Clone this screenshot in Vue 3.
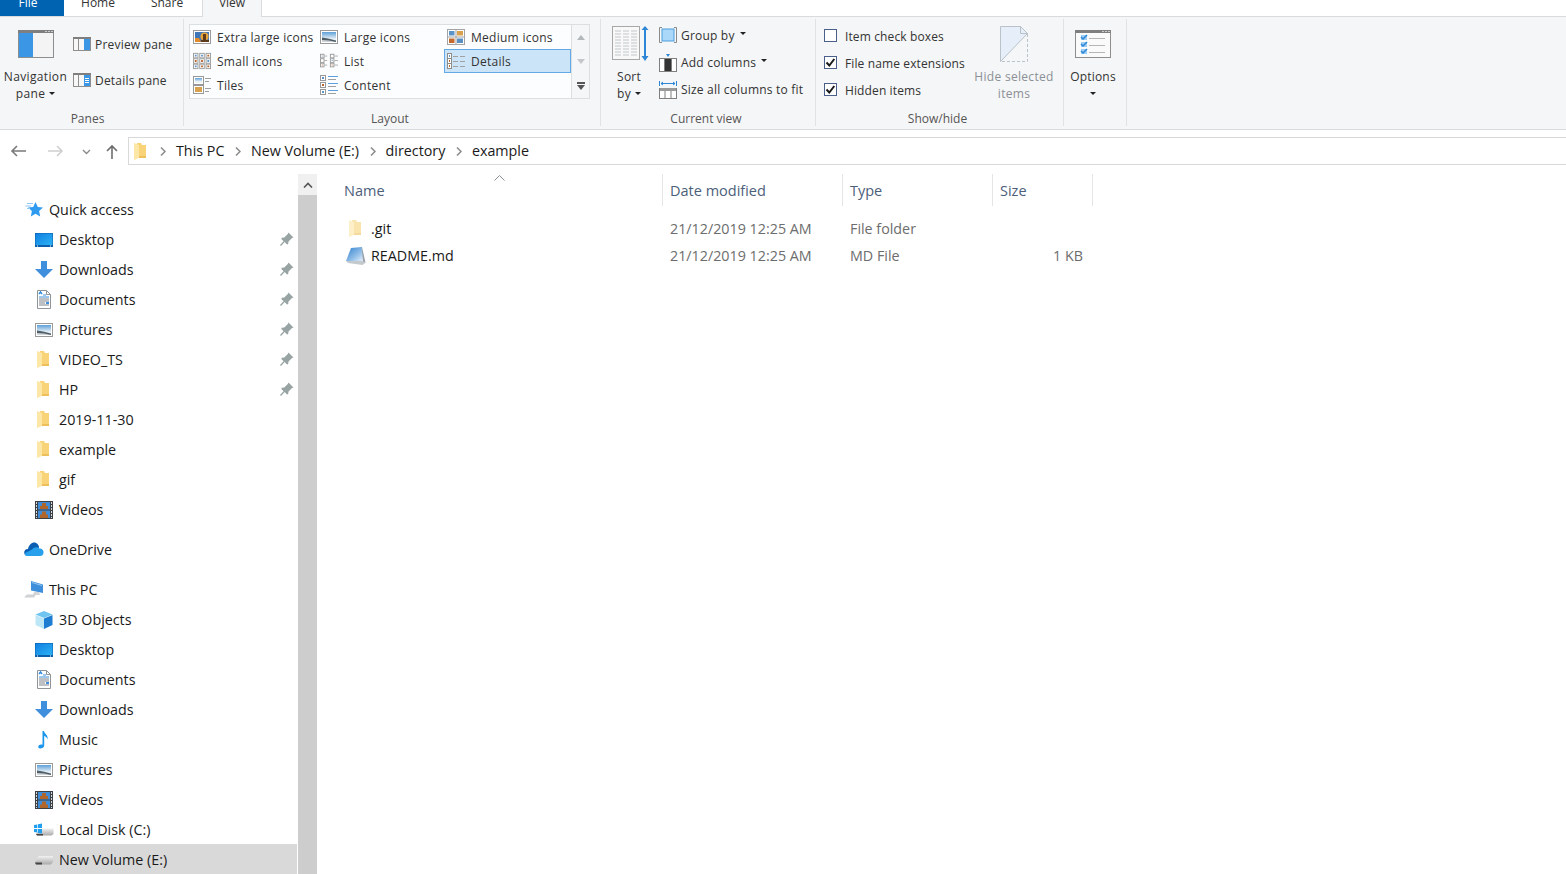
<script setup>
const quick = [
  ['desktop', 'Desktop'], ['downloads', 'Downloads'], ['documents', 'Documents'],
  ['pictures', 'Pictures'], ['folder', 'VIDEO_TS'], ['folder', 'HP'],
]
const quick2 = [['folder', '2019-11-30'], ['folder', 'example'], ['folder', 'gif'], ['videos', 'Videos']]
const pc = [
  ['cube', '3D Objects'], ['desktop', 'Desktop'], ['documents', 'Documents'], ['downloads', 'Downloads'],
  ['music', 'Music'], ['pictures', 'Pictures'], ['videos', 'Videos'], ['localdisk', 'Local Disk (C:)'],
]
const gallery = [
  ['g-xl', 'Extra large icons'], ['pictures-g', 'Large icons'], ['g-med', 'Medium icons'],
  ['g-small', 'Small icons'], ['g-list', 'List'], ['g-details', 'Details'],
  ['g-tiles', 'Tiles'], ['g-content', 'Content'],
]
const crumbs = ['This PC', 'New Volume (E:)', 'directory', 'example']
const checks = [['Item check boxes', false], ['File name extensions', true], ['Hidden items', true]]
const files = [
  { icon: 'folder', cls: 'ghost', name: '.git', date: '21/12/2019 12:25 AM', type: 'File folder', size: '' },
  { icon: 'mdfile', cls: '', name: 'README.md', date: '21/12/2019 12:25 AM', type: 'MD File', size: '1 KB' },
]
</script>

<template>
  <div class="win">
    <svg class="defs" aria-hidden="true">
      <defs>
        <linearGradient id="gDesk" x1="0" y1="0" x2="1" y2="1"><stop offset="0" stop-color="#0f7fe0"/><stop offset="1" stop-color="#2db2f5"/></linearGradient>
        <linearGradient id="gSky" x1="0" y1="0" x2="0" y2="1"><stop offset="0" stop-color="#5d9fd8"/><stop offset=".7" stop-color="#e8f1f7"/><stop offset="1" stop-color="#f2f4f5"/></linearGradient>
        <linearGradient id="gMd" x1="0" y1="0" x2="1" y2="1"><stop offset="0" stop-color="#2f7fcb"/><stop offset=".6" stop-color="#8fbde8"/><stop offset="1" stop-color="#e6f0fa"/></linearGradient>
        <linearGradient id="gDrive" x1="0" y1="0" x2="0" y2="1"><stop offset="0" stop-color="#f2f2f2"/><stop offset="1" stop-color="#a9a9a9"/></linearGradient>
        <symbol id="folder" viewBox="0 0 20 20">
          <path fill="#f8d377" d="M6 1h4l1 2h4v13H6z"/>
          <path fill="#fde7a6" d="M3 1l5 2v13l-5 2z"/>
          <path fill="#edc05c" d="M8 14h7v2H8z"/>
        </symbol>
        <symbol id="mdfile" viewBox="0 0 20 20">
          <path fill="#9aa3ab" d="M15 1l1 0 3.500 15.500-3 2z"/>
          <path fill="url(#gMd)" d="M5 2l10.500-1L17 15 0 15z"/>
          <path fill="#c4c9cd" d="M0 15l17 0 2.500 1.500-3 2.500L2 17z"/>
        </symbol>
        <symbol id="desktop" viewBox="0 0 20 20">
          <rect x="1" y="3" width="18" height="14" fill="#0c5fa8"/>
          <rect x="1.500" y="3.500" width="17" height="11.500" fill="url(#gDesk)"/>
          <path fill="#fff" d="M3 15.600h1v1H3zm13 0h1v1h-1z"/>
        </symbol>
        <symbol id="downloads" viewBox="0 0 20 20">
          <path fill="#3f8fdc" d="M7 1h6v8h6l-9 9-9-9h6z"/>
        </symbol>
        <symbol id="documents" viewBox="0 0 20 20">
          <path fill="#fff" stroke="#8f9499" d="M3.500.5h9l4 4v14h-13z"/>
          <path fill="none" stroke="#8f9499" d="M12.500.5v4h4"/>
          <path stroke="#2f8ce0" stroke-width="1.500" fill="none" d="M5 4l1.500-2 1.500 2"/>
          <path stroke="#3c8fdc" d="M9 5h3M5 7h10"/>
          <path stroke="#7b8188" d="M5 9h10M5 11h10M5 13h6M5 15h10"/>
          <path fill="#3f8fdc" d="M12 12h3v2h-3z"/>
        </symbol>
        <symbol id="pictures" viewBox="0 0 20 20">
          <rect x="1.500" y="3.500" width="17" height="13" fill="#fff" stroke="#9a9a9a"/>
          <rect x="3" y="5" width="14" height="10" fill="url(#gSky)"/>
          <path fill="#4f5d67" d="M3 10.500l6 1 8 2V15H3z"/>
          <path fill="#cfd5d9" d="M3 13l7 .5 7 1.500H3z"/>
        </symbol>
        <symbol id="pictures-g" viewBox="1 3 18 14">
          <rect x="1.500" y="3.500" width="17" height="13" fill="#fff" stroke="#9a9a9a"/>
          <rect x="3" y="5" width="14" height="10" fill="url(#gSky)"/>
          <path fill="#4f5d67" d="M3 10.500l6 1 8 2V15H3z"/>
          <path fill="#cfd5d9" d="M3 13l7 .5 7 1.500H3z"/>
        </symbol>
        <symbol id="videos" viewBox="0 0 20 20">
          <rect x="1" y="1" width="18" height="18" fill="#3b4046"/>
          <path fill="#d8d8d8" d="M2 2h1v2H2zm0 3h1v2H2zm0 3h1v2H2zm0 3h1v2H2zm0 3h1v2H2zm0 3h1v1H2zm15-15h1v2h-1zm0 3h1v2h-1zm0 3h1v2h-1zm0 3h1v2h-1zm0 3h1v2h-1zm0 3h1v1h-1z"/>
          <rect x="4" y="2" width="12" height="7.500" fill="#3f8cd8"/>
          <rect x="4" y="10.500" width="12" height="7.500" fill="#3f8cd8"/>
          <path fill="#b0662a" d="M8 3h4v3h2v3H6V6h2zm0 8.500h4v3h2V18H6v-3.500h2z"/>
        </symbol>
        <symbol id="star" viewBox="0 0 20 20">
          <path fill="#2f9bf0" d="M11.500 2l2.300 5 5.200.6-3.900 3.500 1.100 5.400-4.700-2.800-4.700 2.800 1.100-5.400L4 7.600l5.200-.6z"/>
          <path stroke="#8ec8f4" d="M3 3.500h6M1.500 6H7M3 8.500h3" fill="none"/>
        </symbol>
        <symbol id="onedrive" viewBox="0 0 20 20">
          <path fill="#0a5fb2" d="M1 15C-.5 13 0 9 4 9 5 4 9 1.500 12 3c2 1 3 2.500 3 4.500L9 14z"/>
          <path fill="#28a0ec" d="M3 16c-2 0-3-2-1-3.500l6-3c2-2.500 5-3 7.500-1 2.500 0 4.500 2 4 4.500-.2 2-1.500 3-3.500 3z"/>
        </symbol>
        <symbol id="pc" viewBox="0 0 20 20">
          <path fill="#3d8fdc" d="M7 1l12 3.500V13L7 10.500z"/>
          <path fill="#9ac9ef" d="M8 2l10 3v1L8 3z"/>
          <path fill="#d5d5d5" d="M10 12h5l1 3H9z"/>
          <path fill="#cfd2d4" d="M3 14.500h9l-2 3H0z"/>
        </symbol>
        <symbol id="cube" viewBox="0 0 20 20">
          <path fill="#6fc5ef" d="M10 1l8.500 3.500L10 8 1.500 4.500z"/>
          <path fill="#bde7f7" d="M1.500 5L10 8.500V19l-8.500-4z"/>
          <path fill="#1d7dd0" d="M18.500 5L10 8.500V19l8.500-4z"/>
        </symbol>
        <symbol id="music" viewBox="0 0 20 20">
          <path fill="#1b96ec" d="M8.500 1h1.500c.4 3 4.500 4 3.500 8.500-.3-2-1.800-3-3.300-3.600V15.500c0 2-2.200 3-4 3s-2.500-1.800-1.500-3c1-1 2.600-1.300 3.800-.8z"/>
        </symbol>
        <symbol id="drive" viewBox="0 0 20 20">
          <path fill="url(#gDrive)" d="M4.500 6h14.500v6l-2 2.500H2l-1-2z"/>
          <path fill="#444" d="M1 12.500h7v2H2z"/>
        </symbol>
        <symbol id="localdisk" viewBox="0 0 20 20">
          <path fill="url(#gDrive)" d="M6 8.500h13.500v5.500l-2 1.500H3l-1-1.500z"/>
          <path fill="#444" d="M2 14h7v1.500H3z"/>
          <path fill="#20a0ee" d="M0 5l3.300-.5V8H0zm4-.7L8 3.500V8H4zM0 9h3.300v3.500L0 12zm4 0h4v4.500l-4-.6z"/>
        </symbol>
        <symbol id="pin" viewBox="0 0 14 14">
          <path fill="#98a3a3" d="M8.500.5l5 5-1.500.5-3.500 3.500-.3 2.500-1.200.5-2.300-2.400L1 14l-1-1 3.600-3.800L1.300 7l.5-1.200 2.500-.3L7.800 2z"/>
        </symbol>
        <symbol id="g-xl" viewBox="0 0 18 16">
          <rect x=".5" y="1.500" width="17" height="13" fill="#fff" stroke="#9a9a9a"/>
          <rect x="2" y="3" width="14" height="10" fill="#3f76b9"/>
          <path fill="#e08b2b" d="M2 9h4l2 4H2z"/>
          <circle cx="11.500" cy="7.500" r="4" fill="#e8a33b"/>
          <path fill="#5c3a1c" d="M10 5h3v6h3v2H8v-2h2z"/>
        </symbol>
        <symbol id="g-med" viewBox="0 0 18 16">
          <rect x=".5" y=".5" width="17" height="15" fill="#fff" stroke="#a3a3a3"/>
          <path fill="#a3a3a3" d="M8.500 0h1v16h-1zM0 7.500h18v1H0z"/>
          <rect x="2" y="2" width="5.500" height="4.500" fill="#5b93c9"/><rect x="10" y="2" width="6" height="4.500" fill="#d9a14e"/>
          <rect x="2" y="9.500" width="5.500" height="4.500" fill="#c46a2c"/><rect x="10" y="9.500" width="6" height="4.500" fill="#5a8fc4"/>
        </symbol>
        <symbol id="g-small" viewBox="0 0 20 18">
          <g fill="#fff" stroke="#989898"><rect x=".5" y=".5" width="5" height="5"/><rect x="7.500" y=".5" width="5" height="5"/><rect x="14.500" y=".5" width="5" height="5"/><rect x=".5" y="6.500" width="5" height="5"/><rect x="7.500" y="6.500" width="5" height="5"/><rect x="14.500" y="6.500" width="5" height="5"/><rect x=".5" y="12.500" width="5" height="5"/><rect x="7.500" y="12.500" width="5" height="5"/><rect x="14.500" y="12.500" width="5" height="5"/></g>
          <path fill="#5b93c9" d="M2 2h2v2H2zm7 0h2v2H9zm7 6h2v2h-2zM2 14h2v2H2z"/>
          <path fill="#b8642a" d="M16 2h2v2h-2zM2 8h2v2H2zm7 0h2v2H9zm0 6h2v2H9zm7 0h2v2h-2z"/>
        </symbol>
        <symbol id="g-list" viewBox="0 0 20 16">
          <g fill="#fff" stroke="#989898"><rect x=".5" y=".5" width="4" height="4"/><rect x=".5" y="5.500" width="4" height="4"/><rect x=".5" y="10.500" width="4" height="4"/><rect x="11.500" y=".5" width="4" height="4"/><rect x="11.500" y="5.500" width="4" height="4"/><rect x="11.500" y="10.500" width="4" height="4"/></g>
          <path stroke="#a8a8a8" d="M5 2.500h3M5 7.500h3M5 12.500h3M16 2.500h4M16 7.500h4M16 12.500h4"/>
          <path fill="#b8642a" d="M2 12h1v1H2zm11 0h1v1h-1z"/><path fill="#5b93c9" d="M2 2h1v1H2zm11 5h1v1h-1z"/>
        </symbol>
        <symbol id="g-details" viewBox="0 0 18 16">
          <rect x=".5" y=".5" width="4" height="15" fill="#fff" stroke="#8c8c8c"/>
          <path stroke="#8c8c8c" d="M1 5.500h3M1 10.500h3"/>
          <path fill="#5b93c9" d="M2 2h1v2H2z"/><path fill="#b8642a" d="M2 7h1v2H2zm0 5h1v2H2z"/>
          <path stroke="#a1a1a1" d="M6 3.500h5M13 3.500h5M6 8.500h5M13 8.500h5M6 13.500h5M13 13.500h5"/>
        </symbol>
        <symbol id="g-tiles" viewBox="0 0 18 18">
          <rect x=".5" y=".5" width="10" height="8" fill="#fff" stroke="#989898"/>
          <rect x="2" y="2" width="7" height="5" fill="url(#gSky)"/>
          <rect x=".5" y="9.500" width="10" height="8" fill="#fff" stroke="#989898"/>
          <rect x="2" y="11" width="7" height="5" fill="#d9a14e"/>
          <path stroke="#a0a0a0" d="M12 2.500h6M12 5.500h4M12 12.500h6M12 15.500h4"/>
        </symbol>
        <symbol id="g-content" viewBox="0 0 18 20">
          <g fill="#fff" stroke="#989898"><rect x=".5" y=".5" width="5" height="5"/><rect x=".5" y="7.500" width="5" height="5"/><rect x=".5" y="14.500" width="5" height="5"/></g>
          <path fill="#5b93c9" d="M2 2h2v2H2zm0 14h2v2H2z"/><path fill="#b8642a" d="M2 9h2v2H2z"/>
          <path stroke="#5f9fdb" d="M8 1.500h10M8 8.500h10M8 15.500h10"/>
          <path stroke="#a0a0a0" d="M8 4.500h8M8 11.500h8M8 18.500h8"/>
        </symbol>
      </defs>
    </svg>

    <header class="tabs">
      <div class="tab file">File</div>
      <div class="tab home">Home</div>
      <div class="tab share">Share</div>
      <div class="tab view">View</div>
    </header>

    <section class="ribbon">
      <div class="group panes">
        <div class="gbody">
          <div class="big navp">
            <svg class="bigicon" width="36" height="28" viewBox="0 0 36 28">
              <rect x=".5" y=".5" width="35" height="27" fill="#f4f4f4" stroke="#8e8e8e"/>
              <rect x="0" y="0" width="36" height="3" fill="#7f7f7f"/>
              <path fill="#ccc" d="M27 1h2v1h-2zm3 0h2v1h-2zm3 0h2v1h-2z"/>
              <rect x="1" y="3" width="14" height="24" fill="#3b97e6"/>
            </svg>
            <div class="bigtext">Navigation<br>pane<i class="caret"></i></div>
          </div>
          <div class="paneopts">
            <div class="paneopt">
              <svg width="18" height="14" viewBox="0 0 18 14"><rect x=".5" y=".5" width="17" height="13" fill="#f7f7f7" stroke="#8e8e8e"/><rect width="18" height="2" fill="#7f7f7f"/><path stroke="#8e8e8e" d="M5.500 2v12"/><rect x="11" y="2" width="6" height="11" fill="#3b97e6"/></svg>
              <span>Preview pane</span>
            </div>
            <div class="paneopt">
              <svg width="18" height="14" viewBox="0 0 18 14"><rect x=".5" y=".5" width="17" height="13" fill="#f7f7f7" stroke="#8e8e8e"/><rect width="18" height="2" fill="#7f7f7f"/><path stroke="#8e8e8e" d="M5.500 2v12"/><rect x="11" y="2" width="6" height="11" fill="#3b97e6"/><path stroke="#fff" d="M12 5.500h4M12 7.500h4M12 9.500h4"/></svg>
              <span>Details pane</span>
            </div>
          </div>
        </div>
        <div class="glabel lb8">Panes</div>
      </div>

      <div class="group layout">
        <div class="gbody">
          <div class="gallery">
            <div v-for="g in gallery" :key="g[1]" class="gitem" :class="{ sel: g[1] === 'Details' }">
              <svg class="gico"><use :href="'#' + g[0]"/></svg>
              <span>{{ g[1] }}</span>
            </div>
          </div>
          <div class="scroller">
            <div class="scell"><i class="tri t-up"></i></div>
            <div class="scell"><i class="tri t-down"></i></div>
            <div class="scell"><i class="more"></i><i class="tri t-dark"></i></div>
          </div>
        </div>
        <div class="glabel lb4">Layout</div>
      </div>

      <div class="group current">
        <div class="gbody">
          <div class="big sortb">
            <svg class="sorticon" width="37" height="35" viewBox="0 0 37 35">
              <rect x=".5" y=".5" width="27" height="33" fill="#f8f8f8" stroke="#a8a8a8"/>
              <path stroke="#c2c7ca" d="M3 5h6M11 5h6M19 5h6M3 8h6M11 8h6M19 8h6M3 11h6M11 11h6M19 11h6M3 14h6M11 14h6M19 14h6M3 17h6M11 17h6M19 17h6M3 20h6M11 20h6M19 20h6M3 23h6M11 23h6M19 23h6M3 26h6M11 26h6M19 26h6M3 29h6M11 29h6M19 29h6"/>
              <path fill="#2d86d6" d="M33 0l3.500 4H34v26h2.500L33 35l-3.500-5H32V4h-2.500z"/>
            </svg>
            <div class="bigtext">Sort<br>by<i class="caret"></i></div>
          </div>
          <div class="viewopts">
            <div class="viewopt">
              <svg width="18" height="17" viewBox="0 0 18 17"><path fill="none" stroke="#8a8a8a" d="M3 .5H.5v15H3M15 .5h2.500v15H15"/><rect x="3" y="2" width="12" height="12" fill="#a9d8f8" stroke="#4d9ddd"/></svg>
              <span>Group by</span><i class="caret"></i>
            </div>
            <div class="viewopt">
              <svg width="18" height="18" viewBox="0 0 18 18"><rect x=".5" y="4.500" width="17" height="13" fill="#fff" stroke="#7f7f7f"/><path stroke="#7f7f7f" d="M5.500 4v14M12.500 4v14"/><rect x="6" y="5" width="6" height="12" fill="#333"/><path fill="#2d86d6" d="M7 0h4L9 3z"/></svg>
              <span>Add columns</span><i class="caret"></i>
            </div>
            <div class="viewopt">
              <svg width="18" height="18" viewBox="0 0 18 18"><rect x=".5" y="7.500" width="17" height="10" fill="#fff" stroke="#7f7f7f"/><path fill="#9a9a9a" d="M1 7h16v3H1z"/><path stroke="#7f7f7f" d="M6 10v8M12 10v8"/><path stroke="#2d86d6" fill="none" d="M.5 0v5M17.500 0v5M2 2.500h14M4 1L2 2.500 4 4M14 1l2 1.500L14 4"/></svg>
              <span>Size all columns to fit</span>
            </div>
          </div>
        </div>
        <div class="glabel lb4">Current view</div>
      </div>

      <div class="group showhide">
        <div class="gbody">
          <div class="checks">
            <label v-for="c in checks" :key="c[0]" class="check">
              <span class="box">
                <svg v-if="c[1]" width="11" height="11" viewBox="0 0 11 11"><path fill="none" stroke="#1a1a1a" stroke-width="2" d="M1.500 5.500l2.800 3 5-6.500"/></svg>
              </span>
              <span class="cktext">{{ c[0] }}</span>
            </label>
          </div>
          <div class="big hidesel">
            <svg class="hideicon" width="28" height="36" viewBox="0 0 28 36">
              <path fill="#e6eef9" d="M.5.500h20l7 7-27 28z"/>
              <path fill="none" stroke="#b9c1c9" d="M.5 35.500V.5h20l7 7h-7v-7M.5 35.500l27-28"/>
              <path fill="none" stroke="#b9c1c9" stroke-dasharray="3 2" d="M27.500 8v27.500H1"/>
            </svg>
            <div class="bigtext dim">Hide selected<br>items</div>
          </div>
        </div>
        <div class="glabel lb4">Show/hide</div>
      </div>

      <div class="group options">
        <div class="gbody">
          <div class="big optb">
            <svg class="bigicon" width="36" height="28" viewBox="0 0 36 28">
              <rect x=".5" y=".5" width="35" height="27" fill="#fafafa" stroke="#8e8e8e"/>
              <rect width="36" height="3" fill="#7f7f7f"/>
              <path fill="#ccc" d="M27 1h2v1h-2zm3 0h2v1h-2zm3 0h2v1h-2z"/>
              <rect x="6" y="5" width="6" height="5" fill="#9ccdf4"/><rect x="6" y="12" width="6" height="5" fill="#9ccdf4"/><rect x="6" y="19" width="6" height="5" fill="#9ccdf4"/>
              <path fill="none" stroke="#2d86d6" stroke-width="1.500" d="M6 7l2 2 4-4M6 14l2 2 4-4M6 21l2 2 4-4"/>
              <path stroke="#b5b5b5" d="M14 8.500h16M14 15.500h16M14 22.500h16"/>
            </svg>
            <div class="bigtext">Options<br><i class="caret solo"></i></div>
          </div>
        </div>
      </div>
    </section>

    <nav class="addr">
      <svg class="arr back" width="16" height="12" viewBox="0 0 16 12"><path fill="none" stroke="#7a7a7a" stroke-width="1.600" d="M16 6H2M7 1L2 6l5 5"/></svg>
      <svg class="arr fwd" width="16" height="12" viewBox="0 0 16 12"><path fill="none" stroke="#d0d0d0" stroke-width="1.600" d="M0 6h14M9 1l5 5-5 5"/></svg>
      <svg class="arr hist" width="9" height="6" viewBox="0 0 9 6"><path fill="none" stroke="#8a8a8a" stroke-width="1.400" d="M1 1l3.500 3.500L8 1"/></svg>
      <svg class="arr upa" width="12" height="15" viewBox="0 0 12 15"><path fill="none" stroke="#6e6e6e" stroke-width="1.600" d="M6 15V2M1 7l5-5 5 5"/></svg>
      <div class="bar">
        <svg class="barfolder" width="12" height="17" viewBox="3 1 12 17"><use href="#folder" x="0" y="0" width="20" height="20"/></svg>
        <template v-for="c in crumbs" :key="c">
          <svg class="chev" width="6" height="9" viewBox="0 0 6 9"><path fill="none" stroke="#8a8a8a" stroke-width="1.500" d="M1 .5l4 4-4 4"/></svg>
          <span class="crumb">{{ c }}</span>
        </template>
      </div>
    </nav>

    <main class="main">
      <aside class="tree">
        <div class="ti top"><svg class="ni"><use href="#star"/></svg><span>Quick access</span></div>
        <div v-for="q in quick" :key="q[1]" class="ti sub">
          <svg class="ni"><use :href="'#' + q[0]"/></svg><span>{{ q[1] }}</span>
          <svg class="pin"><use href="#pin"/></svg>
        </div>
        <div v-for="q in quick2" :key="q[1]" class="ti sub">
          <svg class="ni"><use :href="'#' + q[0]"/></svg><span>{{ q[1] }}</span>
        </div>
        <div class="ti top gapt"><svg class="ni"><use href="#onedrive"/></svg><span>OneDrive</span></div>
        <div class="ti top gapt"><svg class="ni"><use href="#pc"/></svg><span>This PC</span></div>
        <div v-for="q in pc" :key="q[1]" class="ti sub">
          <svg class="ni"><use :href="'#' + q[0]"/></svg><span>{{ q[1] }}</span>
        </div>
        <div class="ti sub active"><svg class="ni"><use href="#drive"/></svg><span>New Volume (E:)</span></div>
      </aside>
      <div class="vbar"><div class="vup"><svg width="10" height="6" viewBox="0 0 10 6"><path fill="none" stroke="#555" stroke-width="1.600" d="M1 5.500l4-4 4 4"/></svg></div></div>
      <div class="list">
        <div class="lhead">
          <div class="hc c1">Name</div>
          <div class="hc c2">Date modified</div>
          <div class="hc c3">Type</div>
          <div class="hc c4">Size</div>
          <svg class="sortcaret" width="11" height="6" viewBox="0 0 11 6"><path fill="none" stroke="#8a8f94" d="M.5 5.500l5-5 5 5"/></svg>
        </div>
        <div v-for="f in files" :key="f.name" class="lrow">
          <div class="lname c1"><svg class="fi" :class="f.cls"><use :href="'#' + f.icon"/></svg><span>{{ f.name }}</span></div>
          <div class="lcell c2">{{ f.date }}</div>
          <div class="lcell c3">{{ f.type }}</div>
          <div class="lcell c4 right">{{ f.size }}</div>
        </div>
      </div>
    </main>
  </div>
</template>

<style>
html, body { margin: 0; overflow: hidden; background: #fff; }
</style>

<style scoped>
.win { width: 1566px; height: 874px; overflow: hidden; background: #fff; font-family: "Open Sans", "Noto Sans", sans-serif; color: #1a1a1a; }
.defs { display: block; width: 0; height: 0; }
i { display: inline-block; }

.tabs { height: 17px; display: flex; box-sizing: border-box; border-bottom: 1px solid #dadbdc; font-size: 12px; }
.tab { height: 16px; line-height: 6px; text-align: center; color: #333; overflow: hidden; box-sizing: border-box; }
.file { width: 64px; background: #0063b1; color: #fff; padding-right: 8px; }
.home { width: 70px; padding-right: 2px; }
.share { width: 68px; padding-right: 2px; }
.view { width: 60px; height: 17px; background: #f5f6f7; border: solid #dadbdc; border-width: 0 1px; }

.ribbon { height: 113px; box-sizing: border-box; display: flex; background: #f5f6f7; border-bottom: 1px solid #dadbdc; padding-top: 2px; font-size: 12px; letter-spacing: .2px; color: #333; }
.group { height: 107px; box-sizing: border-box; border-right: 1px solid #e1e2e3; display: flex; flex-direction: column; }
.gbody { height: 91px; display: flex; }
.glabel { height: 16px; line-height: 18px; text-align: center; color: #555; box-sizing: border-box; letter-spacing: 0; }
.lb8 { padding-right: 8px; }
.lb4 { padding-right: 4px; }
.panes { width: 184px; }
.layout { width: 417px; }
.current { width: 215px; }
.showhide { width: 248px; }
.options { width: 63px; }

.big { display: flex; flex-direction: column; align-items: center; flex: none; }
.bigicon { display: block; margin-top: 11px; }
.bigtext { margin-top: 10px; line-height: 17px; text-align: center; white-space: nowrap; }
.dim { color: #8b9096; }
.caret { width: 0; height: 0; border: 3px solid transparent; border-top-color: #222; border-bottom-width: 0; margin-left: 4px; vertical-align: 3px; }
.caret.solo { margin-left: 0; }
.navp { width: 71px; }
.navp .bigtext { letter-spacing: .35px; }
.paneopts { display: flex; flex-direction: column; gap: 12px; padding: 13px 0 0 2px; }
.paneopt { height: 24px; display: flex; align-items: center; gap: 4px; white-space: nowrap; }

.layout .gbody { padding: 5px 0 0 5px; }
.gallery { width: 383px; height: 75px; box-sizing: border-box; background: #fcfdfe; border: 1px solid #dcdfe1; display: grid; grid-template-columns: repeat(3, 127px); grid-auto-rows: 24px; }
.gitem { display: flex; align-items: center; box-sizing: border-box; padding-left: 3px; gap: 6px; white-space: nowrap; letter-spacing: .27px; }
.gitem.sel { background: #cce4f7; box-shadow: inset 0 0 0 1px #62a9e5; }
.gico { width: 18px; height: 20px; flex: none; }
.scroller { width: 18px; height: 75px; box-sizing: border-box; border: 1px solid #dcdfe1; border-left: 0; display: flex; flex-direction: column; }
.scell { height: 24.300px; display: flex; flex-direction: column; align-items: center; justify-content: center; gap: 1px; }
.tri { width: 0; height: 0; border: 4px solid transparent; }
.t-up { border-bottom-color: #b3b7bb; border-top-width: 0; border-bottom-width: 5px; }
.t-down { border-top-color: #c3c7cb; border-bottom-width: 0; border-top-width: 5px; }
.t-dark { border-top-color: #555; border-bottom-width: 0; border-top-width: 5px; }
.more { width: 8px; height: 2px; background: #555; }

.sortb { width: 56px; }
.sorticon { display: block; margin: 7px 0 0 3px; }
.sortb .bigtext { margin-top: 7px; }
.viewopts { padding: 3px 0 0 2px; }
.viewopt { height: 27px; display: flex; align-items: center; gap: 4px; white-space: nowrap; }
.viewopt svg { flex: none; }
.viewopt .caret { margin: 0 0 5px 1px; }

.checks { width: 158px; padding: 3px 0 0 8px; box-sizing: border-box; }
.check { height: 27px; display: flex; align-items: center; gap: 8px; white-space: nowrap; letter-spacing: .12px; }
.cktext { margin-top: 2px; }
.box { width: 13px; height: 13px; box-sizing: border-box; border: 1px solid #4a5f8a; background: #fff; flex: none; display: flex; align-items: center; justify-content: center; }
.hidesel { width: 80px; }
.hidesel .bigtext { margin-top: 6px; letter-spacing: .3px; }
.hideicon { display: block; margin-top: 7px; }
.optb { width: 58px; }

.addr { height: 44px; box-sizing: border-box; display: flex; align-items: flex-start; padding: 7px 0 0 10px; }
.arr { flex: none; }
.back { margin: 8px 22px 0 0; }
.fwd { margin: 8px 18px 0 0; }
.hist { margin: 12px 15px 0 0; }
.upa { margin: 7px 10px 0 0; }
.bar { flex: 1; height: 28px; box-sizing: border-box; border: 1px solid #d9d9d9; border-right: 0; display: flex; align-items: center; font-size: 14.300px; color: #1a1a1a; padding: 0 0 2px 5px; }
.barfolder { margin: 2px 14px 0 0; }
.chev { margin-top: 2px; }
.crumb { margin: 0 10.500px 0 10px; white-space: nowrap; }

.main { display: flex; height: 700px; }
.tree { width: 297px; padding-top: 20px; box-sizing: border-box; font-size: 14.300px; flex: none; }
.ti { height: 30px; display: flex; align-items: center; position: relative; white-space: nowrap; }
.top { padding-left: 24px; }
.sub { padding-left: 34px; }
.gapt { margin-top: 10px; }
.ni { width: 20px; height: 20px; margin: 2px 5px 0 0; flex: none; }
.pin { position: absolute; left: 280px; top: 8px; width: 14px; height: 14px; }
.active { background: #d9d9d9; }
.vbar { width: 19px; margin-left: 1px; background: #cdcdcd; flex: none; }
.vup { height: 21px; background: #f0f0f0; display: flex; align-items: center; justify-content: center; }

.list { flex: 1; font-size: 14.300px; }
.lhead { height: 32px; display: flex; position: relative; color: #4c607a; font-size: 14.500px; }
.hc { box-sizing: border-box; height: 32px; line-height: 33px; border-right: 1px solid #e5e5e5; padding-left: 7px; }
.c1 { width: 346px; }
.hc.c1 { padding-left: 27px; }
.c2 { width: 180px; }
.c3 { width: 150px; }
.c4 { width: 100px; }
.sortcaret { position: absolute; left: 177px; top: 1px; }
.lrow { display: flex; height: 27px; align-items: center; }
.lhead + .lrow { margin-top: 9px; }
.lname { box-sizing: border-box; display: flex; align-items: center; padding-left: 27px; }
.fi { width: 20px; height: 20px; margin: 0 5px 0 2px; flex: none; }
.ghost { opacity: .6; }
.lcell { box-sizing: border-box; padding-left: 7px; color: #6d6d6d; white-space: nowrap; }
.right { text-align: right; padding: 0 10px 0 0; }
</style>
